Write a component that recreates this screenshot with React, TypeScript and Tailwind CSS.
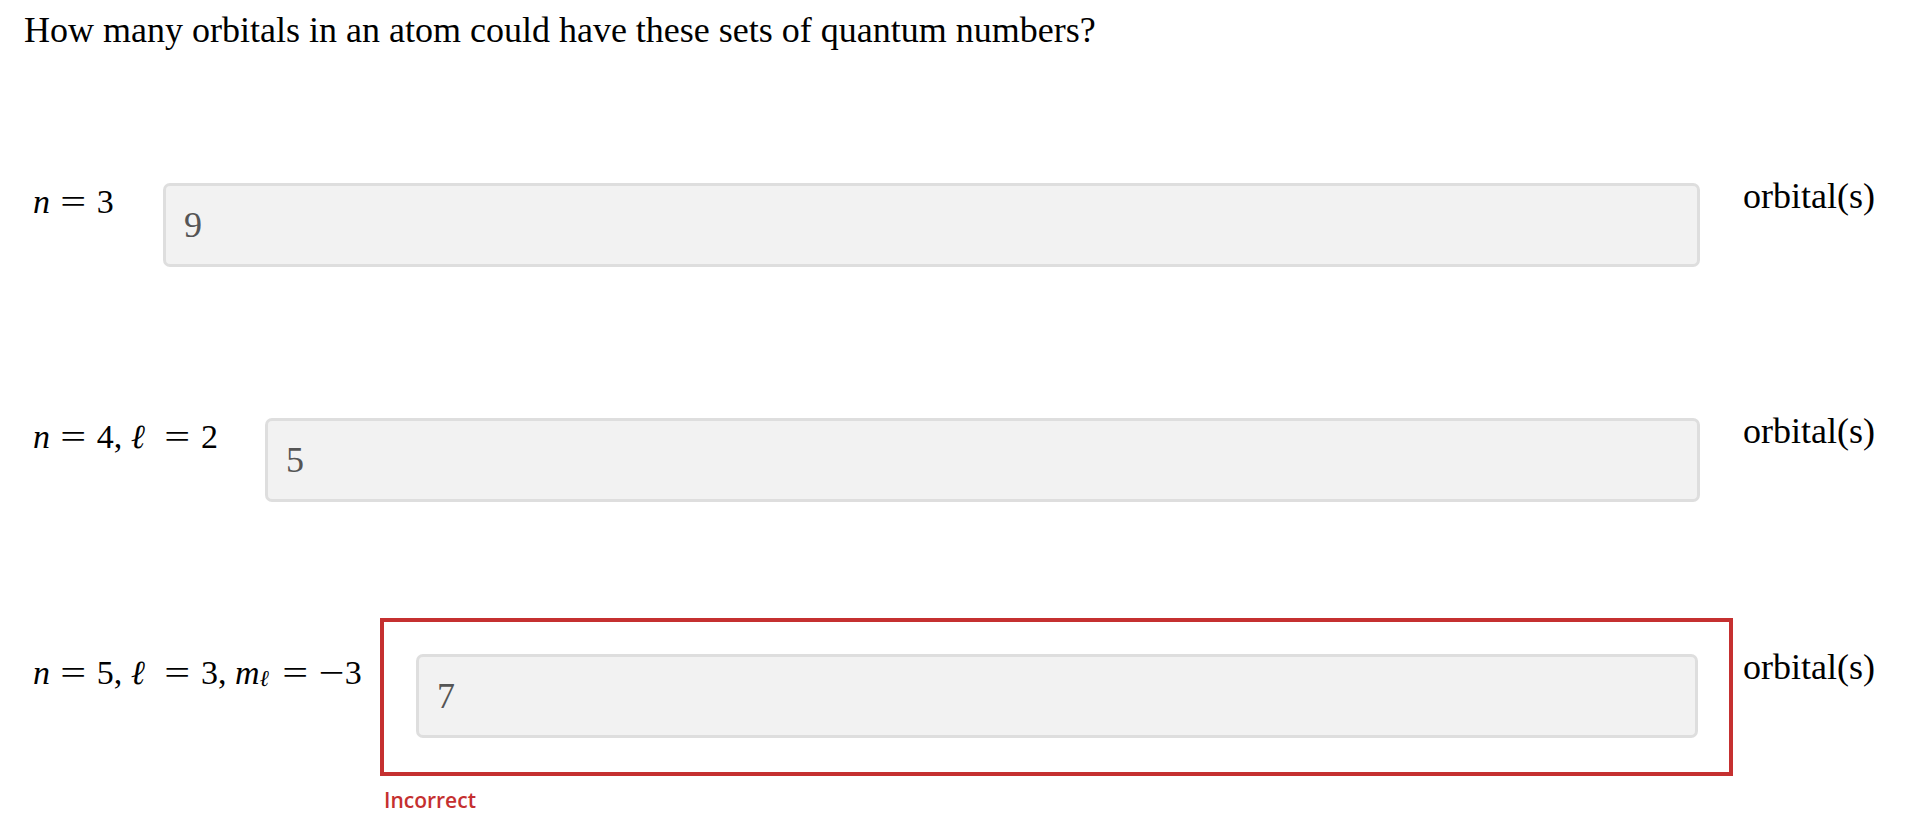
const serif = { fontFamily: '"Liberation Serif", "Times New Roman", serif' }

// math-style operators are wider than the text glyphs
function Op({ c }: { c: string }) {
  return <span className="inline-block w-[0.778em] text-center not-italic scale-x-[1.35]">{c}</span>
}

function Eq() {
  return (
    <span className="mx-[0.3em]">
      <Op c="=" />
    </span>
  )
}

function Sep() {
  return <span className="inline-block w-[0.25em]" />
}

function Ell() {
  return <i className="inline-block mr-[0.27em]">ℓ</i>
}

function AnswerInput({ value }: { value: string }) {
  return (
    <input
      readOnly
      value={value}
      style={serif}
      className="block w-full h-[84px] bg-[#f2f2f2] border-[3px] border-[#dedede] rounded-[7px] pl-[18px] text-[36px] leading-[40px] text-[#555555] outline-none"
    />
  )
}

export default function App() {
  return (
    <div className="w-[1908px] min-h-[834px] bg-white text-black" style={serif}>
      <p className="pt-[10px] pl-[24px] text-[36px] leading-[40px]">
        How many orbitals in an atom could have these sets of quantum numbers?
      </p>

      {/* n = 3 */}
      <div className="flex items-start pl-[33px] mt-[133px]">
        <div className="w-[130px] shrink-0 text-[34px] leading-[40px] mt-[-1px] whitespace-nowrap">
          <i>n</i><Eq />3
        </div>
        <div className="flex-1">
          <AnswerInput value="9" />
        </div>
        <div className="w-[208px] shrink-0 pl-[43px] text-[36px] leading-[40px] mt-[-7px]">orbital(s)</div>
      </div>

      {/* n = 4, l = 2 */}
      <div className="flex items-start pl-[33px] mt-[151px]">
        <div className="w-[232px] shrink-0 text-[34px] leading-[40px] mt-[-1px] whitespace-nowrap">
          <i>n</i><Eq />4,<Sep /><Ell /><Eq />2
        </div>
        <div className="flex-1">
          <AnswerInput value="5" />
        </div>
        <div className="w-[208px] shrink-0 pl-[43px] text-[36px] leading-[40px] mt-[-7px]">orbital(s)</div>
      </div>

      {/* n = 5, l = 3, ml = -3 */}
      <div className="flex items-start pl-[33px] mt-[116px]">
        <div className="w-[347px] shrink-0 text-[34px] leading-[40px] mt-[35px] whitespace-nowrap">
          <i>n</i><Eq />5,<Sep /><Ell /><Eq />3,<Sep /><i>m</i>
          <sub className="text-[23px] italic relative top-[2px] mr-[0.1em]">ℓ</sub>
          <Eq /><Op c="−" />3
        </div>
        <div className="flex-1">
          <div className="border-[4px] border-[#c53030] pt-[32px] pb-[34px] pl-[32px] pr-[31px]">
            <AnswerInput value="7" />
          </div>
          <div
            className="mt-[10px] pl-[4px] text-[21px] leading-[28px] font-semibold text-[#c53030]"
            style={{ fontFamily: '"Open Sans", "Noto Sans", sans-serif' }}
          >
            Incorrect
          </div>
        </div>
        <div className="w-[175px] shrink-0 pl-[10px] text-[36px] leading-[40px] mt-[29px]">orbital(s)</div>
      </div>
    </div>
  )
}
